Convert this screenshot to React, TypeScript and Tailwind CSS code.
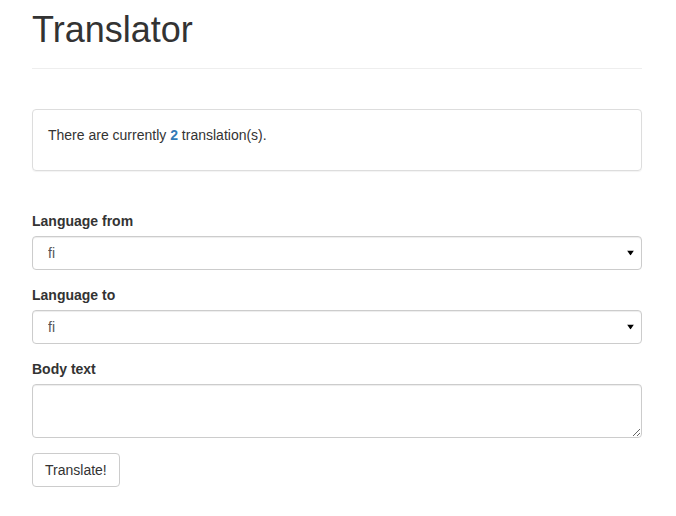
import { useState } from "react";

const languages = ["fi", "en", "sv"];

export default function App() {
  const [from, setFrom] = useState("fi");
  const [to, setTo] = useState("fi");
  const [body, setBody] = useState("");

  const Arrow = () => (
    <svg
      className="pointer-events-none absolute right-[8px] top-1/2 -translate-y-1/2"
      width="7"
      height="5"
      viewBox="0 0 7 5"
    >
      <path d="M0 0h7L3.5 5z" fill="#000" />
    </svg>
  );

  return (
    <main className="min-h-screen bg-white text-[#333] text-[14px] leading-5 font-['Liberation_Sans',Arial,sans-serif]">
      <div className="ml-[32px] w-[610px]">
        {/* Header */}
        <div className="pt-[10px] pb-[18px] border-b border-[#eee]">
          <h1 className="text-[36px] leading-[39.6px] font-normal">Translator</h1>
        </div>

        {/* Count panel */}
        <div className="mt-[40px] border border-[#ddd] rounded shadow-[0_1px_1px_rgba(0,0,0,0.05)] p-[15px]">
          <p className="mb-[10px]">
            There are currently <span className="font-bold text-[#337ab7]">2</span> translation(s).
          </p>
        </div>

        {/* Form */}
        <form className="mt-[40px]" onSubmit={e => e.preventDefault()}>
          <div className="mb-[15px]">
            <label className="block font-bold mb-[5px]">Language from</label>
            <div className="relative">
              <select
                value={from}
                onChange={e => setFrom(e.target.value)}
                className="block w-full h-[34px] appearance-none bg-white border border-[#ccc] rounded pl-[15px] pr-3 text-[#555] shadow-[inset_0_1px_1px_rgba(0,0,0,0.075)] outline-none"
              >
                {languages.map(l => <option key={l}>{l}</option>)}
              </select>
              <Arrow />
            </div>
          </div>

          <div className="mb-[15px]">
            <label className="block font-bold mb-[5px]">Language to</label>
            <div className="relative">
              <select
                value={to}
                onChange={e => setTo(e.target.value)}
                className="block w-full h-[34px] appearance-none bg-white border border-[#ccc] rounded pl-[15px] pr-3 text-[#555] shadow-[inset_0_1px_1px_rgba(0,0,0,0.075)] outline-none"
              >
                {languages.map(l => <option key={l}>{l}</option>)}
              </select>
              <Arrow />
            </div>
          </div>

          <div className="mb-[15px]">
            <label className="block font-bold mb-[5px]">Body text</label>
            <textarea
              value={body}
              onChange={e => setBody(e.target.value)}
              rows={2}
              className="block w-full h-[54px] bg-white border border-[#ccc] rounded px-3 py-1.5 text-[#555] shadow-[inset_0_1px_1px_rgba(0,0,0,0.075)] outline-none"
            />
          </div>

          <button
            type="submit"
            className="h-[34px] bg-white border border-[#ccc] rounded px-3 text-[#333]"
          >
            Translate!
          </button>
        </form>
      </div>
    </main>
  );
}
